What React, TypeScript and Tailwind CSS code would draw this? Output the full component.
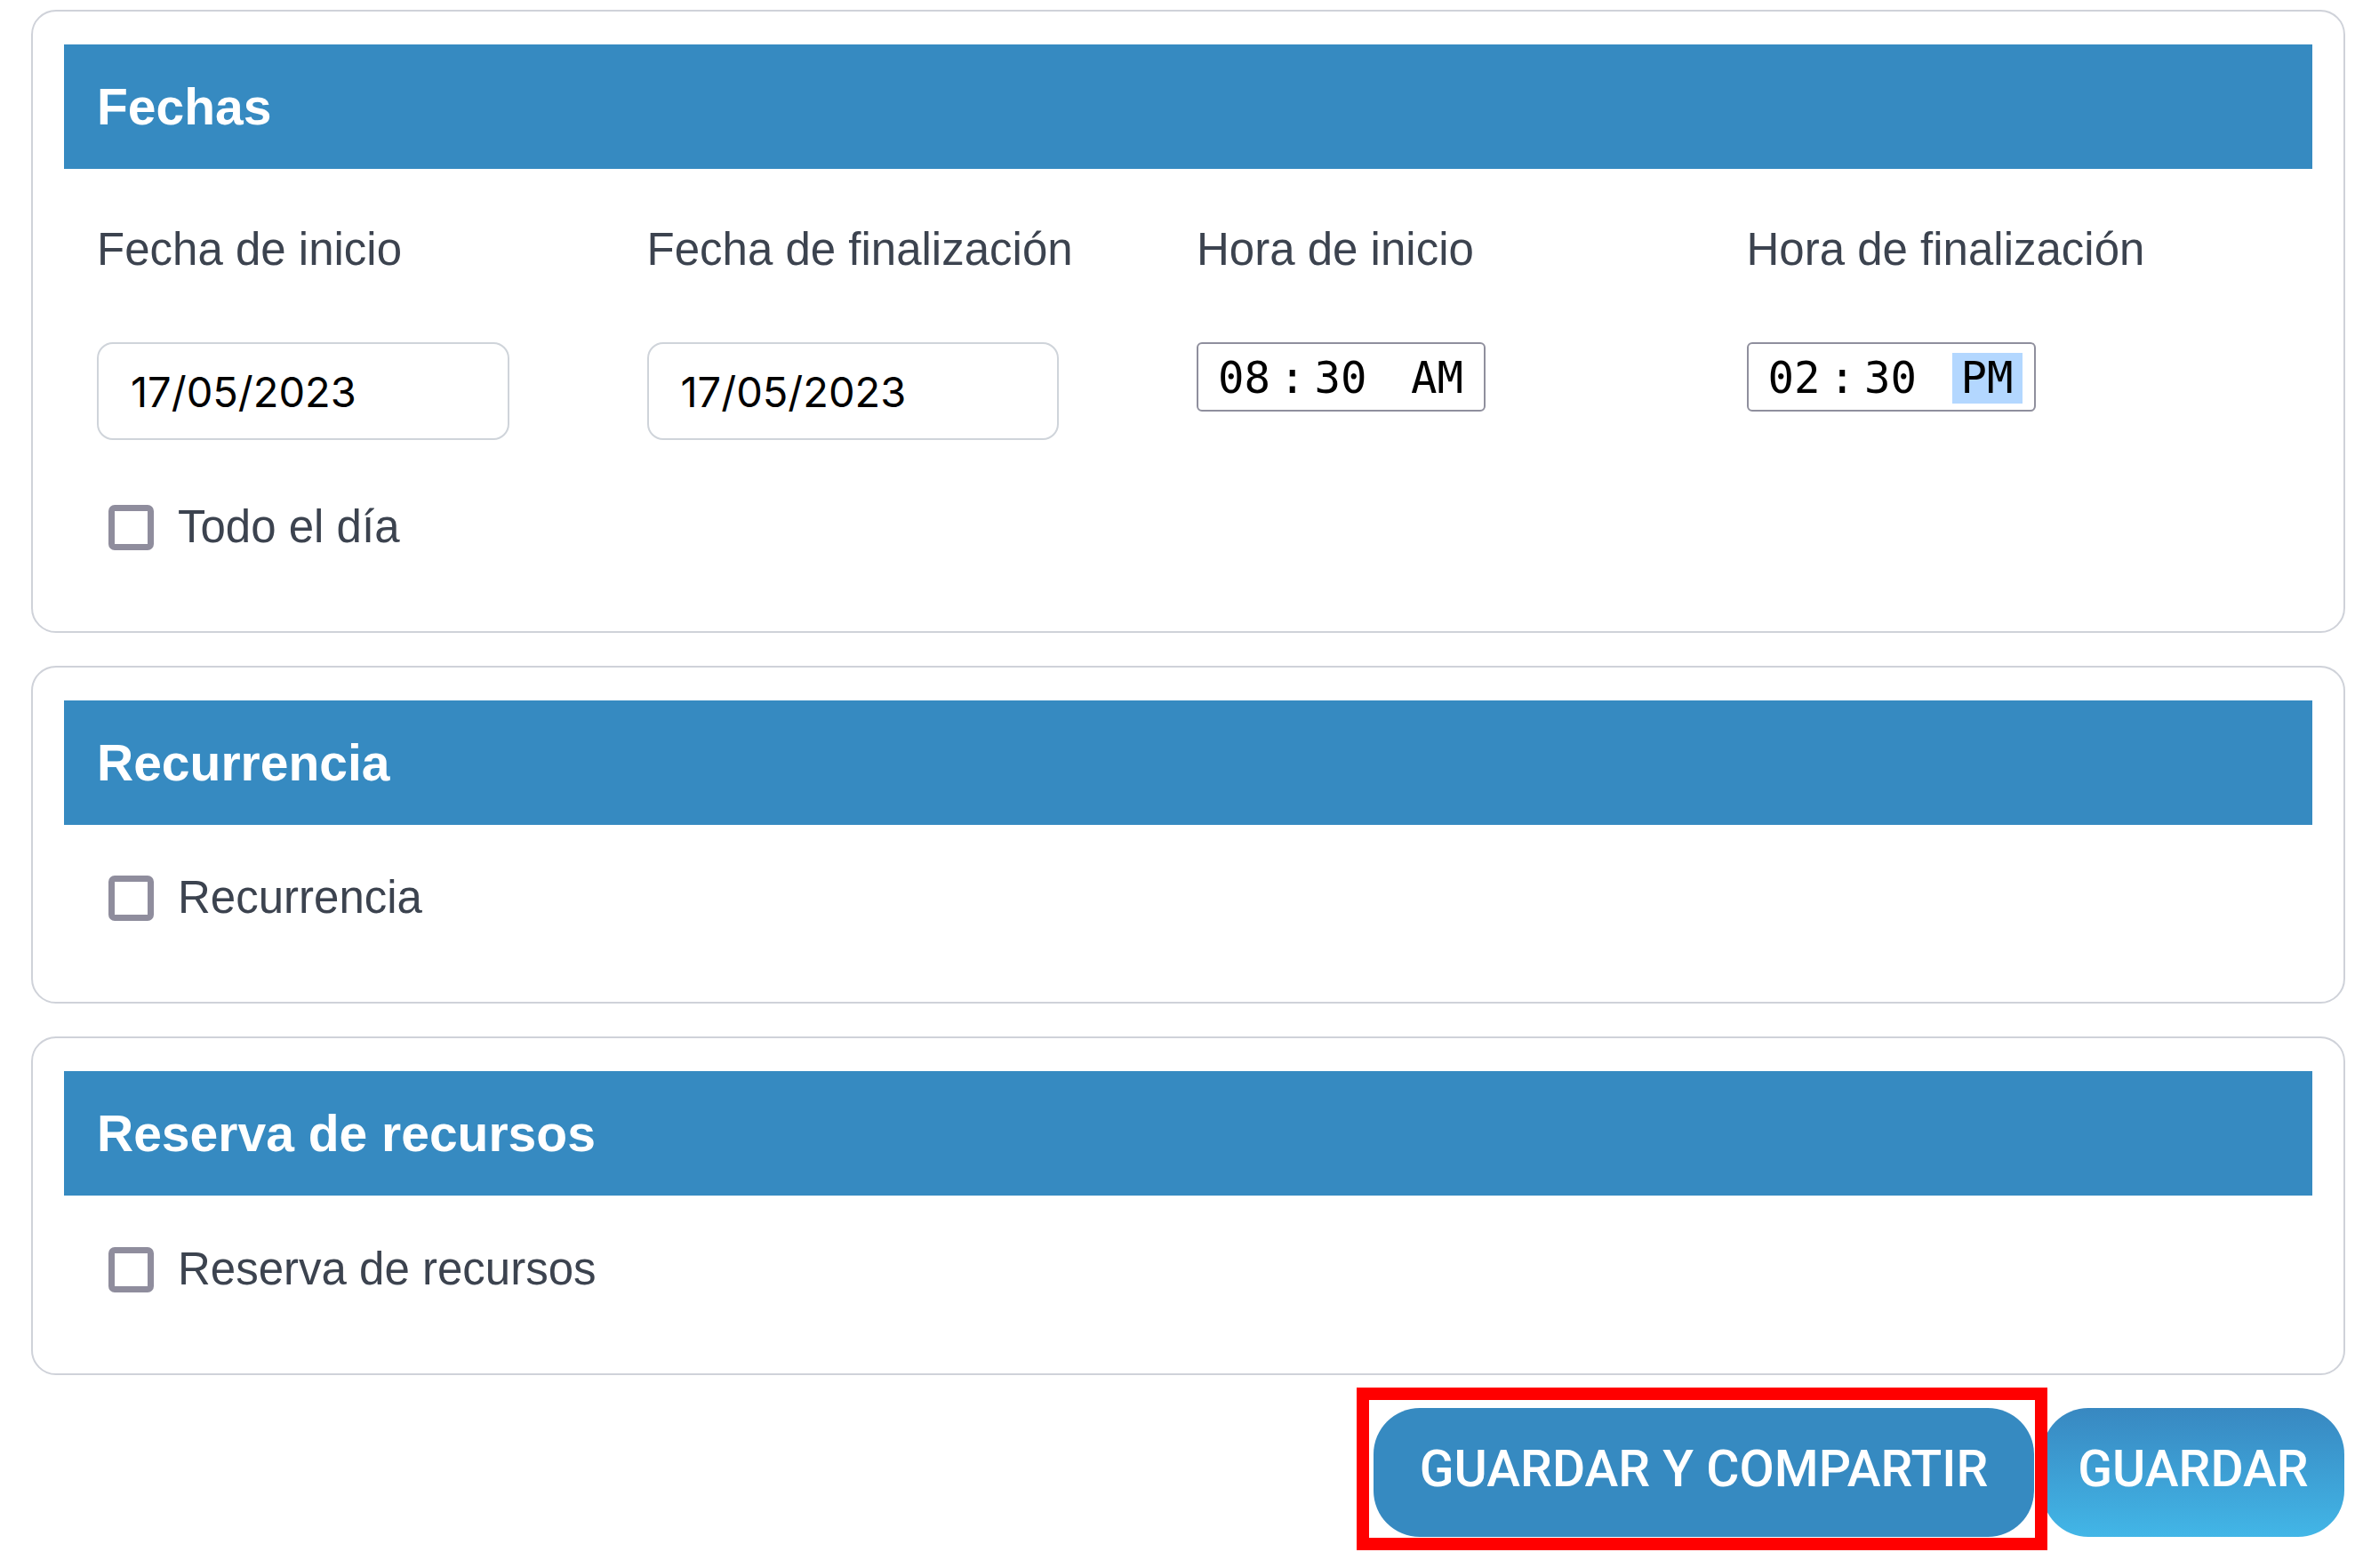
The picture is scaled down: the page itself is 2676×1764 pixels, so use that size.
import React, { useState } from 'react';

interface SectionProps {
  title: string;
  children: React.ReactNode;
}

interface FieldProps {
  id: string;
  label: string;
  defaultValue: string;
}

interface TimeFieldProps extends FieldProps {
  selected?: boolean;
}

interface CheckFieldProps {
  id: string;
  label: string;
}

const Section = ({ title, children }: SectionProps): React.JSX.Element => (
  <section className="rounded-[28px] border-2 border-[#cfd2d9] px-[35px] pt-[37px] pb-[86px]">
    <h2 className="flex h-[140px] items-center bg-[#368ac1] px-[37px] text-[57px] font-bold text-white">
      {title}
    </h2>
    <div className="pl-[37px]">{children}</div>
  </section>
);

const DateField = ({ id, label, defaultValue }: FieldProps): React.JSX.Element => (
  <div className="flex flex-col items-start gap-[73px]">
    <label htmlFor={id} className="whitespace-nowrap">
      {label}
    </label>
    <input
      id={id}
      type="text"
      defaultValue={defaultValue}
      className="h-[110px] w-3/4 rounded-[18px] border-2 border-[#cfd4da] px-[36px] font-['Inter',sans-serif] text-[47px] text-black"
    />
  </div>
);

const TimeField = ({ id, label, defaultValue, selected }: TimeFieldProps): React.JSX.Element => (
  <div className="flex flex-col items-start gap-[73px]">
    <label htmlFor={id} className="whitespace-nowrap">
      {label}
    </label>
    <input
      id={id}
      type="time"
      defaultValue={defaultValue}
      className={`h-[78px] w-[325px] rounded-[6px] border-2 border-[#8f8f9d] px-[12px] pt-[2px] font-['DejaVu_Sans_Mono',monospace] text-[49px] leading-[57px] text-black [&::-webkit-calendar-picker-indicator]:hidden [&::-webkit-datetime-edit-hour-field]:px-[10px] [&::-webkit-datetime-edit-minute-field]:px-[10px] [&::-webkit-datetime-edit-ampm-field]:px-[10px] ${
        selected ? '[&::-webkit-datetime-edit-ampm-field]:bg-[#b3d7ff]' : ''
      }`}
    />
  </div>
);

const CheckField = ({ id, label }: CheckFieldProps): React.JSX.Element => {
  const [checked, setChecked] = useState(false);

  return (
    <div className="flex items-center gap-[27px] pl-[13px]">
      <input
        id={id}
        type="checkbox"
        checked={checked}
        onChange={() => setChecked(!checked)}
        className="size-[51px] appearance-none rounded-[7px] border-[7px] border-[#8f8d9d] bg-white checked:bg-[#368ac1]"
      />
      <label htmlFor={id}>{label}</label>
    </div>
  );
};

const App = (): React.JSX.Element => {
  return (
    <form className="flex flex-col gap-[37px] bg-white pt-[11px] pr-[38px] pb-[36px] pl-[35px] font-['Liberation_Sans',Arial,sans-serif] text-[51px] leading-[62px] text-[#3c434f]">
      <Section title="Fechas">
        <div className="mt-[60px] mb-[67px] grid grid-cols-4 pr-[18px]">
          <DateField id="start-date" label="Fecha de inicio" defaultValue="17/05/2023" />
          <DateField id="end-date" label="Fecha de finalización" defaultValue="17/05/2023" />
          <TimeField id="start-time" label="Hora de inicio" defaultValue="08:30" />
          <TimeField id="end-time" label="Hora de finalización" defaultValue="14:30" selected />
        </div>
        <CheckField id="all-day" label="Todo el día" />
      </Section>

      <Section title="Recurrencia">
        <div className="mt-[51px]">
          <CheckField id="recurrence" label="Recurrencia" />
        </div>
      </Section>

      <Section title="Reserva de recursos">
        <div className="mt-[52px]">
          <CheckField id="resources" label="Reserva de recursos" />
        </div>
      </Section>

      <div className="flex justify-end gap-[9px] pr-px font-['Roboto',sans-serif] text-[57px] font-medium text-white">
        <div className="relative z-10">
          <button
            type="button"
            className="h-[145px] w-[743px] rounded-[52px] bg-[#368ac1] pb-2 whitespace-nowrap"
          >
            GUARDAR Y COMPARTIR
          </button>
          {/* highlight around the share button */}
          <span className="pointer-events-none absolute -top-[23px] -right-[15px] -bottom-[15px] -left-[19px] border-[14px] border-[#ff0000]" />
        </div>
        <button
          type="submit"
          className="h-[145px] w-[340px] rounded-[52px] bg-linear-to-b from-[#3888c1] to-[#42b6e7] pb-2"
        >
          GUARDAR
        </button>
      </div>
    </form>
  );
};

export default App;
